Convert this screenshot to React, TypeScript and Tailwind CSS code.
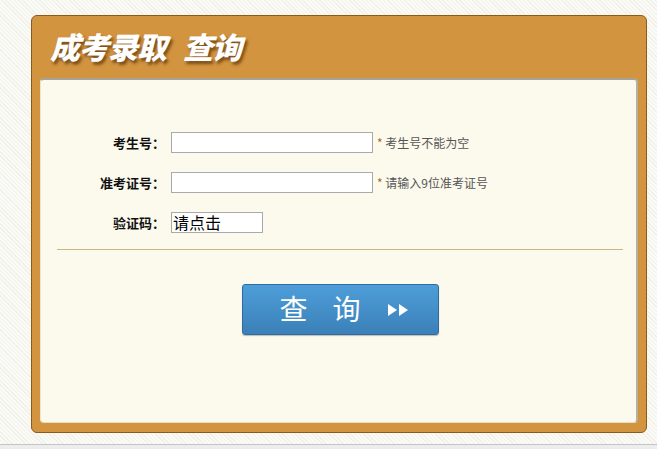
export default function App() {
  const cjk = "font-['Noto_Sans_CJK_SC','Noto_Sans',sans-serif]";
  return (
    <div className={`w-full h-screen flex flex-col ${cjk} bg-[repeating-linear-gradient(45deg,#f1f0e9_0,#f1f0e9_1px,#fafaf6_1px,#fafaf6_3px)]`}>
      <div className="h-[444px] shrink-0 pt-[15px] pl-[31px]">
        <div className="w-[616px] h-[418px] rounded-[6px] border border-[#8d5a18] bg-[#d3943f] flex flex-col">
          <div className="h-[62px] shrink-0 flex items-center pl-[18px] pb-[2px]">
            <h1 className="text-[30px] leading-none font-black italic text-white [text-shadow:2px_3px_3px_rgba(60,30,0,0.6)] tracking-[-1px]">
              成考录取<span className="ml-[17px]">查询</span>
            </h1>
          </div>
          <div className="mx-[8px] mb-[9px] flex-1 rounded-[4px] bg-[#fcf9ed] border-t-2 border-r-2 border-t-[#a8a294] border-r-[#b4b0a4] border-l border-b border-l-[#ece4cc] border-b-[#e4dcc4] flex flex-col">
            <div className="pt-[52px] pl-[23px] flex flex-col gap-[19px]">
              <Row label="考生号：" hint="考生号不能为空" />
              <Row label="准考证号：" hint="请输入9位准考证号" />
              <div className="flex items-center">
                <span className="w-[101px] text-right text-[13px] font-bold text-[#111]">验证码：</span>
                <div className="ml-[6px] w-[92px] h-[21px] border border-[#a9a9a9] bg-white text-[16px] leading-[19px] text-black pl-[1px]">
                  请点击
                </div>
              </div>
            </div>
            <div className="mt-[16px] ml-[16px] mr-[13px] h-px bg-[#c6ba80]" />
            <div className="mt-[34px] flex justify-center pl-[3px]">
              <button className="w-[197px] h-[51px] rounded-[3px] border border-[#2f6b9e] bg-[linear-gradient(#4d9ed9,#3b80b8)] shadow-[0_1px_1px_rgba(0,0,0,0.25)] flex items-center pl-[37px] pb-[3px] text-white text-[28px] leading-none font-normal">
                <span>查</span>
                <span className="ml-[25px]">询</span>
                <svg className="ml-[26px] mt-[3px]" width="22" height="12" viewBox="0 0 22 12">
                  <path d="M1 0 L10 6 L1 12 Z" fill="white" />
                  <path d="M12 0 L21 6 L12 12 Z" fill="white" />
                </svg>
              </button>
            </div>
          </div>
        </div>
      </div>
      <div className="flex-1 border-t border-[#c4c4c4] bg-[#ededed]" />
    </div>
  );
}

function Row({ label, hint }: { label: string; hint: string }) {
  return (
    <div className="flex items-center">
      <span className="w-[101px] text-right text-[13px] font-bold text-[#111]">{label}</span>
      <div className="ml-[6px] w-[202px] h-[21px] border border-[#a9a9a9] bg-white" />
      <span className="ml-[4px] text-[12px] text-[#555]">
        <span className="text-[#b5651d]">*</span> {hint}
      </span>
    </div>
  );
}
